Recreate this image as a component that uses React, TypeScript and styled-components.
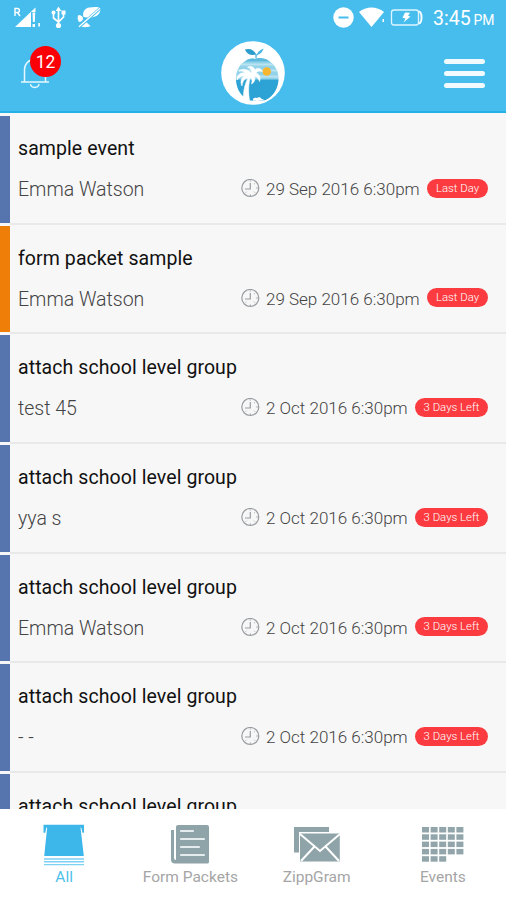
import React from "react";
import styled, { createGlobalStyle } from "styled-components";

const GlobalStyle = createGlobalStyle`
  * { box-sizing: border-box; }
  body { margin: 0; background: #fff; font-family: Roboto, "Liberation Sans", sans-serif; }
`;

const Screen = styled.div`
  width: 506px;
  height: 900px;
  display: flex;
  flex-direction: column;
  overflow: hidden;
  background: #fff;
`;

const Header = styled.header`
  flex: none;
  height: 113px;
  background: #47bdee;
  border-bottom: 2px solid #24b2e6;
`;

const StatusBar = styled.div`
  height: 35px;
  display: flex;
  justify-content: space-between;
  padding: 0 10px 0 13px;
  color: #fff;
`;

const StatusGroup = styled.div`
  display: flex;
`;

const Clock = styled.div`
  width: 63px;
  margin-left: 10px;
  font-size: 19.5px;
  line-height: 38px;
  white-space: nowrap;
`;

const Meridiem = styled.span`
  margin-left: 3px;
  font-size: 14px;
  letter-spacing: -0.2px;
`;

const Toolbar = styled.div`
  height: 76px;
  display: grid;
  grid-template-columns: 1fr 64px 1fr;
  padding: 0 21px;
`;

const BellButton = styled.div`
  position: relative;
  width: 40px;
  padding-top: 21px;
`;

const CountBadge = styled.div`
  position: absolute;
  left: 9px;
  top: 10.5px;
  width: 31px;
  height: 31px;
  border-radius: 50%;
  background: #fb0007;
  color: #fff;
  font-size: 17.5px;
  font-weight: 400;
  line-height: 32px;
  text-align: center;
`;

const LogoSlot = styled.div`
  padding-top: 6px;
`;

const MenuButton = styled.div`
  justify-self: end;
  width: 41px;
  padding-top: 24px;
  display: flex;
  flex-direction: column;
  gap: 7.5px;
`;

const MenuLine = styled.div`
  height: 4.5px;
  border-radius: 2.5px;
  background: #f0faff;
`;

const List = styled.main`
  flex: 1;
  min-height: 0;
  overflow: hidden;
  padding-top: 3px;
  background: #f7f7f7;
`;

const Row = styled.article`
  height: 109.7px;
  display: flex;
  border-bottom: 3px solid #f7f7f7;
`;

const Stripe = styled.div<{ $color: string }>`
  flex: none;
  width: 10px;
  background: ${(p) => p.$color};
`;

const RowBody = styled.div`
  flex: 1;
  padding: 20px 18px 0 8px;
  margin-bottom: -2px;
  border-bottom: 2px solid #e9e9e9;
`;

const Title = styled.div`
  height: 24px;
  font-size: 19.5px;
  line-height: 26px;
  letter-spacing: 0.08px;
  color: #111;
  white-space: nowrap;
`;

const Meta = styled.div`
  display: flex;
  align-items: center;
  height: 24px;
  margin-top: 17px;
  color: #444;
  font-weight: 300;
  white-space: nowrap;
`;

const Author = styled.div`
  width: 223px;
  height: 24px;
  font-size: 19.5px;
  line-height: 26px;
`;

const When = styled.div`
  flex: 1;
  margin-left: 6px;
  font-size: 17px;
  line-height: 24px;
`;

const Due = styled.div<{ $wide: boolean }>`
  flex: none;
  width: ${(p) => (p.$wide ? 73 : 61)}px;
  height: 19px;
  margin-top: -2px;
  border-radius: 10px;
  background: #fb3b3f;
  color: #fff;
  font-size: 11.4px;
  line-height: 19px;
  text-align: center;
`;

const TabBar = styled.nav`
  flex: none;
  height: 91px;
  display: grid;
  grid-template-columns: repeat(4, 1fr);
  padding-left: 1px;
  background: #fff;
`;

const Tab = styled.div<{ $active?: boolean }>`
  display: flex;
  flex-direction: column;
  align-items: center;
  padding-top: 13px;
  color: ${(p) => (p.$active ? "#4fbfea" : "#a5a5a5")};
  svg { height: 44px; }
`;

const TabLabel = styled.div`
  margin-top: 1px;
  font-size: 15.5px;
  line-height: 20px;
  white-space: nowrap;
`;

function SignalIcons() {
  return (
    <svg width="92" height="35" viewBox="13 0 92 35" fill="#fff">
      <path d="M15 27 35.500 7.500V12H31v15z" />
      <path d="M15 16V8.500h2.400a2 2 0 0 1 0 4H15m2.500 0 2.500 3.500" fill="none" stroke="#fff" strokeWidth="1.400" />
      <path d="M32.500 12.500h2.700l-.4 9.500h-1.900zM32.600 24h2.400v3h-2.400zM38.300 23h1.600v3.500h-1.600z" />
      <path d="M58.500 9v17M53.500 14v4l5 4 5-5v-4" fill="none" stroke="#fff" strokeWidth="1.700" />
      <path d="m58.500 6.500 2.800 4.500h-5.600zM61.500 10.500h4v4h-4z" />
      <circle cx="53.500" cy="12.500" r="2" />
      <circle cx="58.500" cy="25.500" r="2.600" />
      <path d="M83.500 17c-1.500-5 1.500-9 6-9.500 5-.8 11-.8 11 1.500S99 15.500 95 16.500l-5 1.500zM78.500 15c2.500 0 4.500 1.500 4.500 3.500S81 22 79 22c-1.500-2-2-5-.5-7zM81 24.500l4.500-3 5 4.500c-3 1.500-7 1.500-9.500.500z" />
      <path d="M78.500 27.500 100.500 8" stroke="#47bdee" strokeWidth="3" />
      <path d="M79 26.800 100 8.300" stroke="#fff" strokeWidth="1.300" />
    </svg>
  );
}

function PowerIcons() {
  return (
    <svg width="91" height="35" viewBox="332 0 91 35">
      <circle cx="343.500" cy="17.500" r="10.200" fill="#fff" />
      <path d="M338.500 17.500h10" stroke="#47bdee" strokeWidth="2" />
      <path d="M359 12c7-6 18-6 25 0l-12.500 15z" fill="#fff" />
      <path d="M382.500 19h1.500v3h-1.500z" fill="#fff" />
      <rect x="391.500" y="10" width="27" height="15" rx="2.500" fill="none" stroke="#ddf5ff" strokeWidth="1.300" />
      <path d="M419 11.500c2 .5 2.500 2 2.500 6s-.5 5.500-2.500 6" fill="none" stroke="#f2fcff" strokeWidth="2" />
      <path d="m405 12.500 5 .2-2 3.300 2.500.5-7 6 2-4-3-.8z" fill="#fff" />
    </svg>
  );
}

function BellIcon() {
  return (
    <svg width="29" height="33" viewBox="21 56 29 33" fill="none" stroke="#e5f8ff" strokeWidth="1.500">
      <path d="M21 82h28M24.500 82V70c0-6 4-10.500 10-10.500S45.500 64 45.500 70v12M30.500 84c.5 4.500 8 4.500 8.500 0" />
    </svg>
  );
}

function OrangeLogo() {
  return (
    <svg width="64" height="64" viewBox="221 41 64 64" fill="none">
      <defs>
        <clipPath id="fruit">
          <path d="M255 59c3-1.500 9-1.500 14 2 6 4 9.500 10 9.500 17 0 10-5 18-12 21.500-4 2-6 .5-10 .5-4 1-7 1-11-2-6-4-9.500-11-9.500-20 0-8 4-14 9.500-17 4-2.500 7-3 9.500-2z" />
        </clipPath>
      </defs>
      <circle cx="253" cy="73" r="31.800" fill="#fff" />
      <g clipPath="url(#fruit)">
        <path d="M235 57h44v44h-44z" fill="#93d3ea" />
        <path d="M235 57h44v4.500h-44z" fill="#5dbade" />
        <path d="M235 64.500h44M235 70.500h44M235 76.500h44" stroke="#b9e3f0" strokeWidth="2" />
        <path d="M235 79.500h44v22h-44z" fill="#2ca3d4" />
        <path d="M253 101c-.5-3 1.500-4 4-3 1.500-1.500 4-1 4.500 1 2 0 3 1 3 2z" fill="#fff" />
      </g>
      <circle cx="266.700" cy="71.500" r="4.300" fill="#f6b630" />
      <path d="M251.500 73c.5-3-1-5-4-6 4-1.500 6.500 0 7.500 3 2-2.500 5-2.500 7.500 1.500-3-1-5-.5-6.500 1.500 3.500 1.500 5 4.500 3.500 8.500-1-3-2.500-5-5-5.500 1 3.500 0 6.500-3 8 1-3 .5-5-1-6.500-2 5-2.500 14-1 23h-6c-.5-8 1-16 4.500-22.500-3.500.5-5.500 3.500-6 8-2-4-1-8 2.500-10-3-.5-5 .5-7.500 4 0-5 3.500-8 8-7-1-2-3-2.500-6-2 3.500-2.500 8-2 12.500 2z" fill="#fff" stroke="#fff" strokeWidth="0.600" />
      <path d="M244.800 49.500c5-1.500 9 0 11.500 5-5 1.500-9 0-11.500-5z" fill="#2b9dcc" />
      <path d="M256 57c.5-4 3-6.500 7.500-8.500-1 4-3.500 5.500-6 6.500z" fill="#4cb8df" />
      <path d="M256 58v-4" stroke="#4cb8df" strokeWidth="1.300" />
    </svg>
  );
}

function ClockIcon() {
  return (
    <svg width="19" height="20" viewBox="0 0 19 20" fill="none" stroke="#989ca0">
      <circle cx="9.300" cy="9" r="8.500" strokeWidth="1.200" />
      <path d="M9.300 4v6H4" strokeWidth="1.200" />
      <path d="M9.300 1.500v1M9.300 15.500v1.500M15.300 9h1.500M13.800 4.500l-.7.700M4.800 13.500l.7-.7M13.800 13.500l-.7-.7" />
    </svg>
  );
}

function AllIcon() {
  return (
    <svg width="42" height="44" viewBox="43 822 42 44" fill="#3db6ea">
      <path d="M43.500 824.700h40.500v8h-1.600l-1-4.700-.9-.8 3.300 28.800H44.200l3-28.800-1 .8-.9 4.700h-1.800z" />
      <path d="M44 859h40M44 861.800h40M44 864.600h40" stroke="#7dd1f3" strokeWidth="1.400" />
    </svg>
  );
}

function PacketsIcon() {
  return (
    <svg width="40" height="44" viewBox="170 822 40 44">
      <path d="M178 825h29q2 0 2 2v35q0 1.500-2 1.500h-32q-4 0-4-4V830h3v28q0 2 2 2V827q0-2 2-2z" fill="#8fa4a9" />
      <path d="M181 831h12M181 839h23M181 847h18M181 855h23" stroke="#e5ecef" strokeWidth="2.200" strokeLinecap="round" />
    </svg>
  );
}

function MailIcon() {
  return (
    <svg width="47" height="44" viewBox="293 822 47 44">
      <path d="M294 827h35v5h-30v20.500h-5z" fill="#8fa4a9" />
      <path d="M300 833.500h39.800v28H300z" fill="#8fa4a9" />
      <path d="m300 834 20 17 20-17M301 861l13-14M339 861l-13-14" stroke="#fff" strokeWidth="2" fill="none" />
    </svg>
  );
}

const cells = [5, 5, 5, 5, 3].flatMap((count, row) =>
  Array.from({ length: count }, (_, col) => ({ row, col }))
);

function CalendarIcon() {
  return (
    <svg width="43" height="44" viewBox="422 822 43 44" fill="#91a5ab">
      {cells.map(({ row, col }) => (
        <rect key={`${row}-${col}`} x={423 + col * 8.600} y={827 + row * 7.300} width="7" height="5.500" />
      ))}
    </svg>
  );
}

const blue = "#5674ad";
const items = [
  { title: "sample event", author: "Emma Watson", when: "29 Sep 2016 6:30pm", due: "Last Day", color: blue },
  { title: "form packet sample", author: "Emma Watson", when: "29 Sep 2016 6:30pm", due: "Last Day", color: "#ee7e08" },
  ...["test 45", "yya s", "Emma Watson", "- -", ""].map((author) => ({
    title: "attach school level group",
    author,
    when: "2 Oct 2016 6:30pm",
    due: "3 Days Left",
    color: blue,
  })),
];

export default function App() {
  return (
    <Screen>
      <GlobalStyle />
      <Header>
        <StatusBar>
          <SignalIcons />
          <StatusGroup>
            <PowerIcons />
            <Clock>3:45<Meridiem>PM</Meridiem></Clock>
          </StatusGroup>
        </StatusBar>
        <Toolbar>
          <BellButton>
            <BellIcon />
            <CountBadge>12</CountBadge>
          </BellButton>
          <LogoSlot><OrangeLogo /></LogoSlot>
          <MenuButton>
            <MenuLine /><MenuLine /><MenuLine />
          </MenuButton>
        </Toolbar>
      </Header>
      <List>
        {items.map((item, i) => (
          <Row key={i}>
            <Stripe $color={item.color} />
            <RowBody>
              <Title>{item.title}</Title>
              {item.author && (
                <Meta>
                  <Author>{item.author}</Author>
                  <ClockIcon />
                  <When>{item.when}</When>
                  <Due $wide={item.due.length > 8}>{item.due}</Due>
                </Meta>
              )}
            </RowBody>
          </Row>
        ))}
      </List>
      <TabBar>
        <Tab $active><AllIcon /><TabLabel>All</TabLabel></Tab>
        <Tab><PacketsIcon /><TabLabel>Form Packets</TabLabel></Tab>
        <Tab><MailIcon /><TabLabel>ZippGram</TabLabel></Tab>
        <Tab><CalendarIcon /><TabLabel>Events</TabLabel></Tab>
      </TabBar>
    </Screen>
  );
}
